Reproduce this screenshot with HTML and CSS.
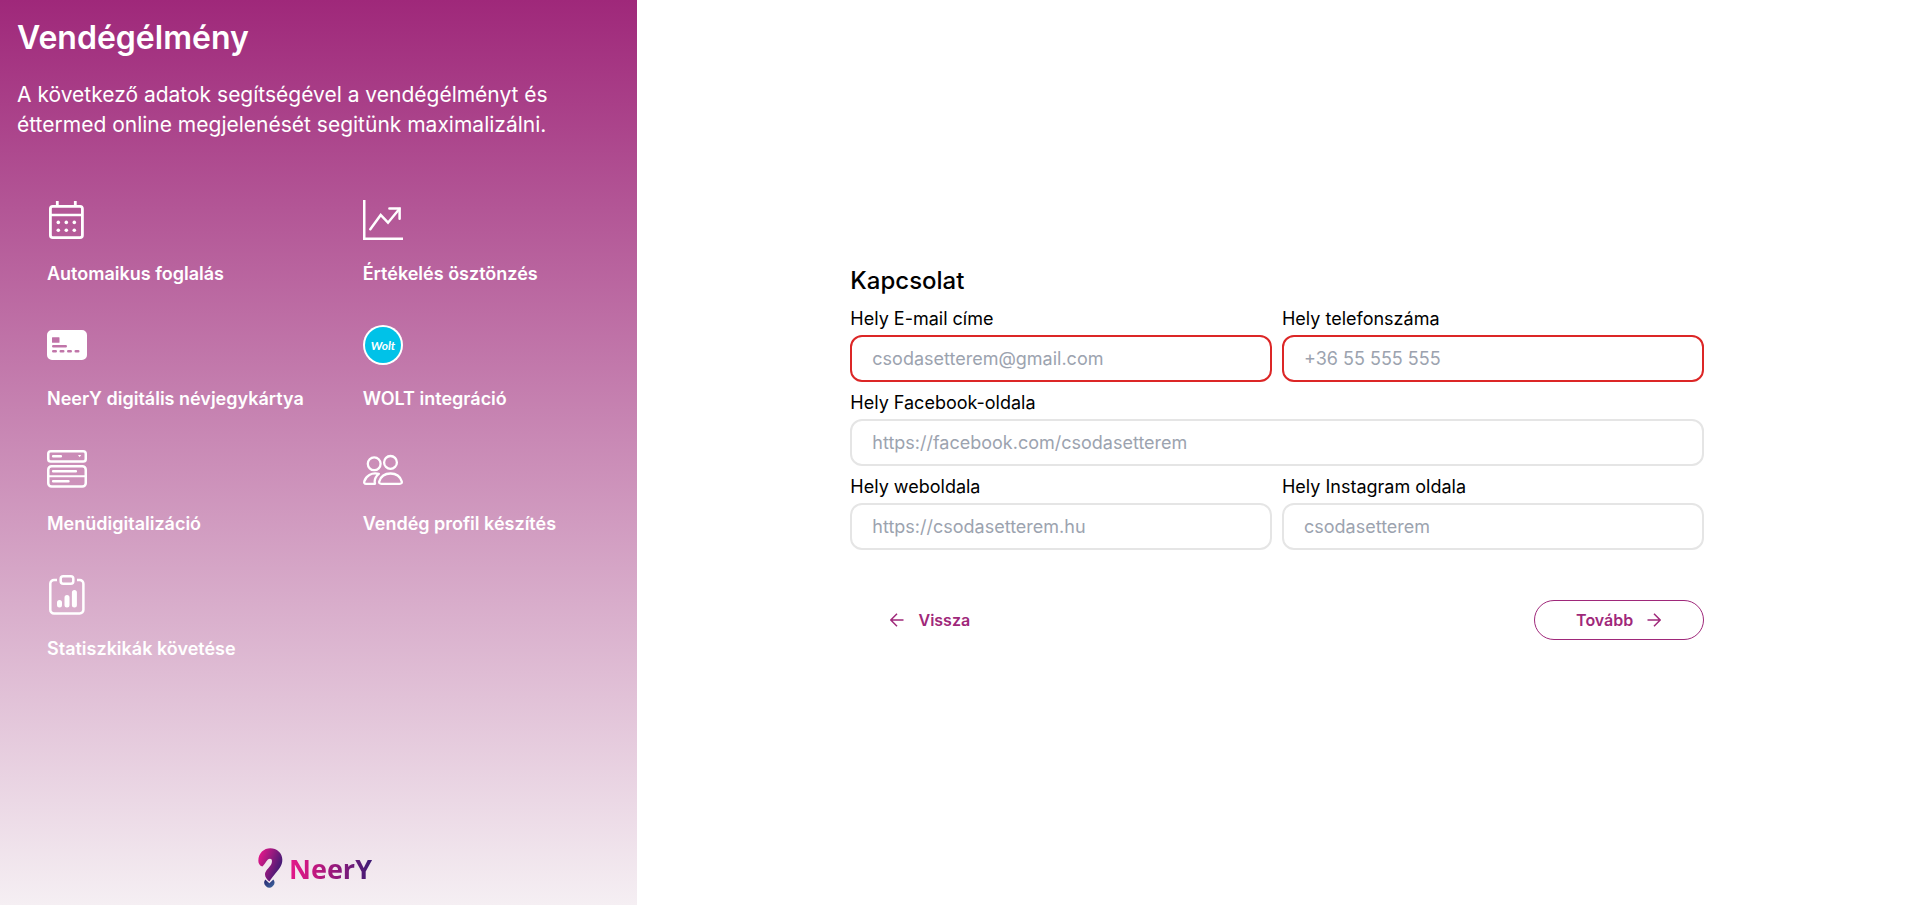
FILE: index.html
```html
<!DOCTYPE html>
<html lang="hu">
<head>
<meta charset="utf-8">
<meta name="viewport" content="width=device-width, initial-scale=1">
<title>NeerY – Vendégélmény</title>
<link rel="stylesheet" href="styles.css">
</head>
<body>
<div class="page">
  <aside class="sidebar">
    <h1 class="sidebar-title">Vendégélmény</h1>
    <p class="sidebar-lead">A következő adatok segítségével a vendégélményt és éttermed online megjelenését segitünk maximalizálni.</p>
    <ul class="features">
      <li class="feature">
        <svg class="feature-icon" viewBox="0 0 40 40" fill="none" stroke="currentColor" aria-hidden="true">
          <rect x="3.4" y="6.4" width="32" height="31.2" rx="2.4" stroke-width="2.8"/>
          <path d="M3 15h33" stroke-width="2.6"/>
          <path d="M10.3 1v5M28.3 1v5" stroke-width="2.8"/>
          <g fill="currentColor" stroke="none"><circle cx="11.3" cy="22.4" r="1.8"/><circle cx="19.3" cy="22.4" r="1.8"/><circle cx="27.3" cy="22.4" r="1.8"/><circle cx="11.3" cy="30.3" r="1.8"/><circle cx="19.3" cy="30.3" r="1.8"/><circle cx="27.3" cy="30.3" r="1.8"/></g>
        </svg>
        <span>Automaikus foglalás</span>
      </li>
      <li class="feature">
        <svg class="feature-icon" viewBox="0 0 40 40" fill="none" stroke="currentColor" aria-hidden="true">
          <path d="M1.25 0v38.75H40" stroke-width="2.5"/>
          <path d="M7.3 29.3 17.7 15l7.3 7.7L36.3 9" stroke-width="2.5" stroke-linecap="round"/>
          <path d="M26.4 8.5h10.2v10.3" stroke-width="2.5" stroke-linecap="round"/>
        </svg>
        <span>Értékelés ösztönzés</span>
      </li>
      <li class="feature">
        <svg class="feature-icon" viewBox="0 0 40 40" fill="currentColor" aria-hidden="true">
          <path fill-rule="evenodd" d="M5 5h30a5 5 0 0 1 5 5v20a5 5 0 0 1-5 5H5a5 5 0 0 1-5-5V10a5 5 0 0 1 5-5zM5.500 12.300a.5.5 0 0 0-.5.5v4.400a.5.5 0 0 0 .5.5h6.500a.5.5 0 0 0 .5-.5v-4.400a.5.5 0 0 0-.5-.5zM6.200 20a1.200 1.200 0 0 0 0 2.400h12.600a1.200 1.200 0 0 0 0-2.400zM6.200 25a1.200 1.200 0 0 0 0 2.400h2.600a1.200 1.200 0 0 0 0-2.400zM13.700 25a1.200 1.200 0 0 0 0 2.400h2.600a1.200 1.200 0 0 0 0-2.400zM21.200 25a1.200 1.200 0 0 0 0 2.400h2.600a1.200 1.200 0 0 0 0-2.400zM28.700 25a1.200 1.200 0 0 0 0 2.400h2.600a1.200 1.200 0 0 0 0-2.400z"/>
        </svg>
        <span>NeerY digitális névjegykártya</span>
      </li>
      <li class="feature">
        <svg class="feature-icon" viewBox="0 0 40 40" aria-hidden="true">
          <circle cx="20" cy="20" r="20" fill="#fff"/>
          <circle cx="20" cy="20" r="18" fill="#00c2e8"/>
          <text class="wolt-text" x="20" y="24.5" text-anchor="middle">Wolt</text>
        </svg>
        <span>WOLT integráció</span>
      </li>
      <li class="feature">
        <svg class="feature-icon" viewBox="0 0 40 40" fill="none" stroke="currentColor" stroke-width="2.5" stroke-linecap="round" aria-hidden="true">
          <rect x="1.25" y="1.25" width="37.5" height="10.3" rx="2.6"/>
          <rect x="1.25" y="16.25" width="37.5" height="20.3" rx="3.4"/>
          <path d="M1.3 26.2h37.4" stroke-width="2"/>
          <path d="M6.1 6.3h7.8M6.1 21.3h22.8M6.1 31.2h15.4" stroke-width="2.4"/>
          <path d="M31 5h3.2l-1.6 2.2z" fill="currentColor" stroke="none"/>
        </svg>
        <span>Menüdigitalizáció</span>
      </li>
      <li class="feature">
        <svg class="feature-icon" viewBox="0 0 40 40" fill="none" stroke="currentColor" stroke-width="2.3" stroke-linejoin="round" stroke-linecap="round" aria-hidden="true">
          <circle cx="11.2" cy="13.8" r="6.4"/>
          <circle cx="27.5" cy="12.4" r="6.4"/>
          <path d="M18.5 33.8h18c2 0 2.6-1 2.2-2.4C37.2 26.5 32.8 23.5 27.5 23.5s-9.7 3-11.2 7.9c-.4 1.4.2 2.4 2.2 2.4z"/>
          <path d="M15.8 23.8C8.5 22 2.7 26 1.3 31.4c-.4 1.4.2 2.4 1.7 2.4h9c-.9-3.5.3-7.1 3.8-10z"/>
        </svg>
        <span>Vendég profil készítés</span>
      </li>
      <li class="feature">
        <svg class="feature-icon" viewBox="0 0 40 40" fill="none" stroke="currentColor" stroke-width="2.5" aria-hidden="true">
          <path d="M10 5H7a3.7 3.7 0 0 0-3.7 3.7v26A3.7 3.7 0 0 0 7 38.5h25.7a3.7 3.7 0 0 0 3.7-3.7v-26A3.7 3.7 0 0 0 32.7 5H30"/>
          <rect x="13.7" y="1.25" width="12.6" height="7.5" rx="2.5"/>
          <path d="M12.5 27.5v2.500M20 22.500V30M27.400 17.500V30" stroke-width="5" stroke-linecap="round"/>
        </svg>
        <span>Statiszkikák követése</span>
      </li>
    </ul>
    <div class="logo">
      <svg class="logo-mark" viewBox="0 0 75 122" aria-hidden="true">
        <defs>
          <linearGradient id="mark" x1="0" y1="0.2" x2="0.9" y2="0.7"><stop offset="0" stop-color="#e5178a"/><stop offset="0.5" stop-color="#921a7e"/><stop offset="1" stop-color="#3c1a74"/></linearGradient>
          <linearGradient id="dot" x1="0" y1="0" x2="1" y2="1"><stop offset="0" stop-color="#27246f"/><stop offset="1" stop-color="#3f6aa0"/></linearGradient>
        </defs>
        <path fill="url(#dot)" d="M22 94l12 11 12-11a15 15 0 1 1-24 0z"/>
        <path fill="url(#mark)" d="M1 38C1 14 18 0 37 0s36 14 36 34c0 16-7 26-18 38-8 10-15 18-21 28-7-6-13-13-13-21 0-11 11-18 18-29 5-9 4-18-3-18-10 0-12 15-23 23C5 53 1 46 1 38z"/>
      </svg>
      <span class="logo-name">NeerY</span>
    </div>
  </aside>
  <main class="content">
    <form class="contact">
      <h2 class="contact-title">Kapcsolat</h2>
      <div class="fields">
        <div class="field">
          <label for="email">Hely E-mail címe</label>
          <input class="invalid" id="email" type="email" placeholder="csodasetterem@gmail.com">
        </div>
        <div class="field">
          <label for="phone">Hely telefonszáma</label>
          <input class="invalid" id="phone" type="tel" placeholder="+36 55 555 555">
        </div>
        <div class="field wide">
          <label for="facebook">Hely Facebook-oldala</label>
          <input id="facebook" type="url" placeholder="https://facebook.com/csodasetterem">
        </div>
        <div class="field">
          <label for="web">Hely weboldala</label>
          <input id="web" type="url" placeholder="https://csodasetterem.hu">
        </div>
        <div class="field">
          <label for="instagram">Hely Instagram oldala</label>
          <input id="instagram" type="text" placeholder="csodasetterem">
        </div>
      </div>
      <div class="actions">
        <button class="btn" type="button">
          <svg class="arrow" viewBox="0 0 14 14" aria-hidden="true"><path d="M13.5 7H1M7 .8.8 7 7 13.2"/></svg>
          Vissza
        </button>
        <button class="btn btn-outline" type="button">
          Tovább
          <svg class="arrow" viewBox="0 0 14 14" aria-hidden="true"><path d="M.5 7H13M7 .8 13.2 7 7 13.2"/></svg>
        </button>
      </div>
    </form>
  </main>
</div>
</body>
</html>
```

FILE: styles.css
```css
* {
  box-sizing: border-box;
}

body {
  margin: 0;
  background: #fff;
  color: #000;
  font-family: Inter, "Liberation Sans", sans-serif;
}

.page {
  display: grid;
  grid-template-columns: 1fr 2fr;
  min-height: 100vh;
}

.sidebar {
  display: flex;
  flex-direction: column;
  padding: 16px 16px 16px 17px;
  background: linear-gradient(#9f287a, #f5eff3);
  color: #fff;
}

.sidebar-title {
  margin: 0;
  font-size: 32px;
  font-weight: 600;
  line-height: 44px;
}

.sidebar-lead {
  max-width: 560px;
  margin: 20px 0 0;
  font-size: 21px;
  line-height: 30px;
}

.features {
  display: grid;
  grid-template-columns: 55% 45%;
  row-gap: 36px;
  margin: 60px 0 0;
  padding: 0 0 0 30px;
  list-style: none;
}

.feature {
  display: flex;
  flex-direction: column;
  gap: 19px;
  font-size: 18px;
  font-weight: 600;
  line-height: 30px;
}

.feature-icon {
  width: 40px;
  height: 40px;
}

.wolt-text {
  fill: #fff;
  font: italic 700 12px Lato, sans-serif;
}

.logo {
  display: flex;
  align-items: center;
  justify-content: center;
  gap: 6px;
  margin-top: auto;
  padding-right: 8px;
}

.logo-mark {
  width: 25px;
  height: 41px;
}

.logo-name {
  background: linear-gradient(90deg, #e5178a, #c3177f 30%, #7a1a7a 70%, #3c1a74);
  background-clip: text;
  color: transparent;
  font-family: "Open Sans", sans-serif;
  font-size: 27px;
  font-weight: 700;
  line-height: 40px;
}

.content {
  display: flex;
  align-items: center;
  justify-content: center;
  padding-left: 6px;
}

.contact {
  width: 67.3%;
  padding-bottom: 2px;
}

.contact-title {
  margin: 0;
  font-size: 24px;
  font-weight: 500;
  line-height: 36px;
}

.fields {
  display: grid;
  grid-template-columns: 1fr 1fr;
  gap: 9px 10px;
  margin-top: 8px;
}

.field {
  display: flex;
  flex-direction: column;
  gap: 4px;
  min-width: 0;
}

.wide {
  grid-column: 1 / -1;
}

.field label {
  font-size: 18px;
  line-height: 24px;
}

.field input {
  width: 100%;
  height: 47px;
  padding: 0 20px;
  border: 2px solid #e5e5e5;
  border-radius: 12px;
  background: #fff;
  font: inherit;
  font-size: 18px;
}

.field .invalid {
  border-color: #dc2626;
}

.field input::placeholder {
  color: #9ca3af;
}

.actions {
  display: flex;
  justify-content: space-between;
  margin-top: 50px;
}

.btn {
  display: flex;
  align-items: center;
  justify-content: center;
  gap: 14px;
  min-width: 160px;
  height: 40px;
  padding: 0;
  border: 1px solid transparent;
  border-radius: 20px;
  background: none;
  color: #9f287a;
  font: inherit;
  font-size: 16px;
  font-weight: 600;
}

.btn-outline {
  min-width: 170px;
  border-color: #9f287a;
}

.arrow {
  width: 14px;
  height: 14px;
  fill: none;
  stroke: currentColor;
  stroke-width: 1.5;
}
```
